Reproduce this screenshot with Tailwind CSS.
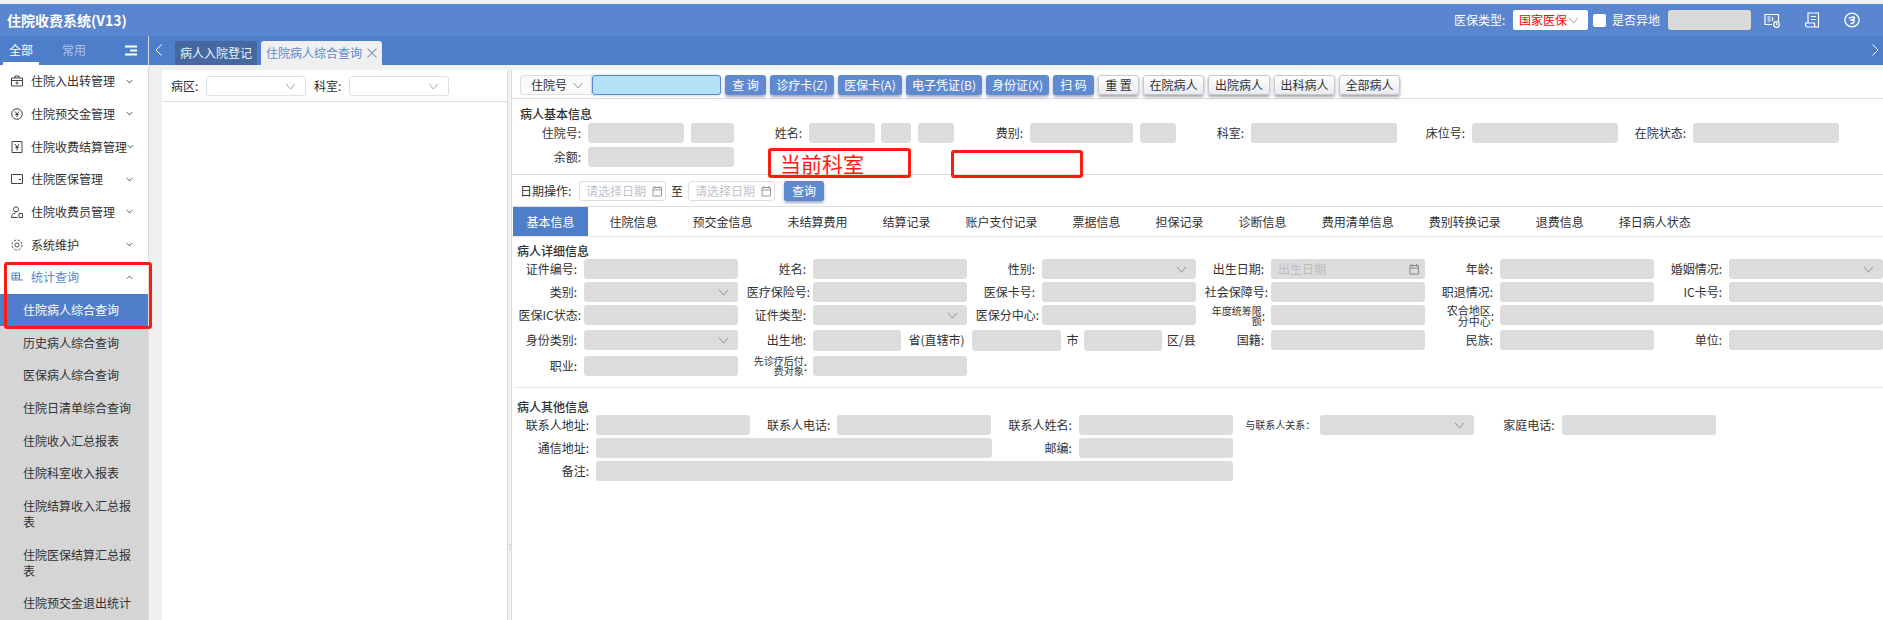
<!DOCTYPE html>
<html lang="zh-CN">
<head>
<meta charset="utf-8">
<title>住院收费系统</title>
<script src="https://cdn.jsdelivr.net/npm/@tailwindcss/browser@4"></script>
</head>
<body class="m-0">
<svg class="hidden" xmlns="http://www.w3.org/2000/svg">
  <symbol id="dn" viewBox="0 0 12 8"><path d="M1 1l5 6 5-6" fill="none" stroke="currentColor" stroke-width="1"/></symbol>
  <symbol id="sm" viewBox="0 0 8 5"><path d="M1 1l3 3 3-3" fill="none" stroke="currentColor" stroke-width="1"/></symbol>
  <symbol id="cal" viewBox="0 0 12 12"><path d="M2 2.500h8.500v8.500h-8.500zM2 5h8.500M4 1v2.500M8.500 1v2.500" fill="none" stroke="currentColor" stroke-width="1"/></symbol>
</svg>
<div class="relative w-[1883px] h-[620px] overflow-hidden flex flex-col bg-[#f0f0f0] text-[12px] text-[#303133] [font-family:'Noto_Sans_CJK_SC',sans-serif]">

  <div class="h-[4px] shrink-0 bg-[#f0f0f0]"></div>

  <!-- header -->
  <header class="h-[32px] shrink-0 bg-[#5a85cf] flex items-center text-white">
    <div class="ml-[7px] text-[14px] font-bold leading-[20px]">住院收费系统(V13)</div>
    <div class="ml-auto flex items-center h-full">
      <span class="w-[59px] whitespace-nowrap">医保类型:</span>
      <div class="w-[75px] h-[20px] bg-white rounded-[2px] flex items-center pl-[6px] text-[#ff0000] whitespace-nowrap">国家医保<svg class="w-[11px] h-[7px] text-[#999] ml-[1px]"><use href="#dn"/></svg></div>
      <span class="w-[13px] h-[13px] bg-white rounded-[2px] ml-[5px]"></span>
      <span class="ml-[6px] w-[49px] whitespace-nowrap">是否异地</span>
      <div class="ml-[7px] w-[83px] h-[20px] bg-[#d9d9d9] rounded-[3px]"></div>
      <svg class="ml-[13px] w-[16px] h-[15px]" viewBox="0 0 16 15" fill="none" stroke="#fff" stroke-width="1.200"><path d="M8 11.500H1V1.500h13.500v7"/><path d="M3.500 4h3M3.500 6h3M3.500 8h3M8.500 4v4"/><circle cx="12.500" cy="11.500" r="2.800"/><path d="M12.500 10v1.500h1.200"/></svg>
      <svg class="ml-[24px] w-[16px] h-[17px]" viewBox="0 0 16 17" fill="none" stroke="#fff" stroke-width="1.200"><path d="M4 11V1h10.500v14h-11a2 2 0 0 1-2-2v-2h9v2a2 2 0 0 0 2 2"/><path d="M7 4.500h5M7 7.500h5"/></svg>
      <svg class="ml-[24px] mr-[23px] w-[16px] h-[16px]" viewBox="0 0 16 16" fill="none" stroke="#fff" stroke-width="1.300"><ellipse cx="8" cy="8" rx="7.200" ry="6.800"/><path d="M5 6.500c1-1.500 5-2 5.500-.5 0 2-3 1.500-3.500 2 1 .5 2.500 0 3 .5.500 2-1.500 3.500-3.500 3" stroke-width="1.500"/></svg>
    </div>
  </header>

  <div class="flex-1 flex min-h-0">
    <!-- sidebar -->
    <aside class="w-[149px] shrink-0 border-r border-[#dcdcdc] bg-white flex flex-col overflow-hidden">
      <div class="h-[29px] shrink-0 bg-[#4e7dc9] relative flex items-center">
        <div class="w-[36px] ml-[3px] h-full border-b-[3px] border-white text-white flex items-center pl-[6px] pt-[1px]">全部</div>
        <span class="ml-[23px] text-[#aac4ea] pb-[2px]">常用</span>
        <svg class="ml-[39px] w-[12px] h-[11px]" viewBox="0 0 12 11" fill="none" stroke="#fff" stroke-width="2"><path d="M0 1.500h12M5 5.500h7M0 9.500h12"/></svg>
      </div>
      <div class="h-[32.67px] flex items-center pl-[11px] text-[#303133]">
        <svg class="w-[12px] h-[12px] mr-[8px] shrink-0" viewBox="0 0 12 12" fill="none" stroke="#444" stroke-width="1"><path d="M.5 3h11v8h-11zM4 3V1h4v2M.5 5.500h11M6 6.500v3M4.500 8h3"/></svg>
        <span class="whitespace-nowrap">住院入出转管理</span>
        <svg class="ml-auto mr-[15px] w-[7px] h-[5px] shrink-0"><use href="#sm"/></svg>
      </div>
      <div class="h-[32.67px] flex items-center pl-[11px]">
        <svg class="w-[12px] h-[12px] mr-[8px] shrink-0" viewBox="0 0 12 12" fill="none" stroke="#444" stroke-width="1"><circle cx="6" cy="6" r="5.300"/><path d="M4 3.500L6 6l2-2.500M6 6v3M4.200 6.500h3.600"/></svg>
        <span class="whitespace-nowrap">住院预交金管理</span>
        <svg class="ml-auto mr-[15px] w-[7px] h-[5px] shrink-0"><use href="#sm"/></svg>
      </div>
      <div class="h-[32.67px] flex items-center pl-[11px]">
        <svg class="w-[12px] h-[12px] mr-[8px] shrink-0" viewBox="0 0 12 12" fill="none" stroke="#444" stroke-width="1"><path d="M1 .5h10v11H1zM4 3l2 3 2-3M6 6v3.500M4.200 6.500h3.600"/></svg>
        <span class="whitespace-nowrap w-[96px] shrink-0">住院收费结算管理</span>
        <svg class="mr-[15px] w-[7px] h-[5px] shrink-0"><use href="#sm"/></svg>
      </div>
      <div class="h-[32.67px] flex items-center pl-[11px]">
        <svg class="w-[12px] h-[12px] mr-[8px] shrink-0" viewBox="0 0 12 12" fill="none" stroke="#444" stroke-width="1"><path d="M.5 1.500h11v9H.5zM7.500 6.500h2.500"/></svg>
        <span class="whitespace-nowrap">住院医保管理</span>
        <svg class="ml-auto mr-[15px] w-[7px] h-[5px] shrink-0"><use href="#sm"/></svg>
      </div>
      <div class="h-[32.67px] flex items-center pl-[11px]">
        <svg class="w-[12px] h-[12px] mr-[8px] shrink-0" viewBox="0 0 12 12" fill="none" stroke="#444" stroke-width="1"><circle cx="5" cy="3.300" r="2.500"/><path d="M.5 11.500c0-3 1.500-4.500 4-4.500M.5 11.500h6M8 7.500h3.500v4H8z"/></svg>
        <span class="whitespace-nowrap">住院收费员管理</span>
        <svg class="ml-auto mr-[15px] w-[7px] h-[5px] shrink-0"><use href="#sm"/></svg>
      </div>
      <div class="h-[32.67px] flex items-center pl-[11px]">
        <svg class="w-[12px] h-[12px] mr-[8px] shrink-0" viewBox="0 0 12 12" fill="none" stroke="#555" stroke-width="1"><circle cx="6" cy="6" r="2"/><circle cx="6" cy="6" r="5" stroke-dasharray="2.500 1.400"/></svg>
        <span class="whitespace-nowrap">系统维护</span>
        <svg class="ml-auto mr-[15px] w-[7px] h-[5px] shrink-0"><use href="#sm"/></svg>
      </div>
      <div class="h-[32.67px] flex items-center pl-[11px] text-[#5a85cf]">
        <svg class="w-[12px] h-[12px] mr-[8px] shrink-0" viewBox="0 0 12 12" fill="none" stroke="#5a85cf" stroke-width="1"><path d="M1 2h7.500v7H1zM1 4.500h7.500M1 7h7.500M4.700 2v7M8.500 9H12"/></svg>
        <span class="whitespace-nowrap">统计查询</span>
        <svg class="ml-auto mr-[15px] w-[7px] h-[5px] shrink-0 rotate-180 text-[#444]"><use href="#sm"/></svg>
      </div>
      <div class="flex-1 bg-[#d5d5d5] text-[#303133] leading-[16px]">
        <div class="h-[32.67px] flex items-center pl-[23px] bg-[#4e7dc9] text-white">住院病人综合查询</div>
        <div class="h-[32.67px] flex items-center pl-[23px]">历史病人综合查询</div>
        <div class="h-[32.67px] flex items-center pl-[23px]">医保病人综合查询</div>
        <div class="h-[32.67px] flex items-center pl-[23px]">住院日清单综合查询</div>
        <div class="h-[32.67px] flex items-center pl-[23px]">住院收入汇总报表</div>
        <div class="h-[32.67px] flex items-center pl-[23px]">住院科室收入报表</div>
        <div class="h-[48.67px] flex items-center pl-[23px] pr-[15px]">住院结算收入汇总报表</div>
        <div class="h-[48.67px] flex items-center pl-[23px] pr-[15px]">住院医保结算汇总报表</div>
        <div class="h-[32.67px] flex items-center pl-[23px]">住院预交金退出统计</div>
      </div>
    </aside>

    <main class="flex-1 min-w-0 flex flex-col">
      <!-- tab bar -->
      <div class="h-[29px] shrink-0 bg-[#4e7dc9] flex items-end relative">
        <svg class="self-center ml-[6px] mr-[13px] w-[7px] h-[12px] mb-[1px]" viewBox="0 0 7 12" fill="none" stroke="#fff" stroke-width="1"><path d="M6.500.5L1 6l5.500 5.500"/></svg>
        <div class="w-[82px] h-[24px] bg-[#44689f] rounded-t-[3px] text-[#eef3fb] flex items-center justify-center">病人入院登记</div>
        <div class="ml-[4px] w-[121px] h-[24px] bg-[#f0f0f0] rounded-t-[3px] text-[#5a8ad0] flex items-center pl-[5px]">住院病人综合查询<svg class="ml-[5px] w-[10px] h-[10px]" viewBox="0 0 9 9" stroke="#7c93b8" stroke-width="1"><path d="M.5.500l8 8M8.500.500l-8 8"/></svg></div>
        <svg class="ml-auto self-center mr-[4px] w-[7px] h-[12px] mb-[1px]" viewBox="0 0 7 12" fill="none" stroke="#fff" stroke-width="1"><path d="M.5.500L6 6 .5 11.500"/></svg>
      </div>

      <div class="flex-1 min-h-0 flex pl-[13px] pt-[5px]">
        <!-- left tree panel -->
        <section class="w-[346px] shrink-0 bg-white border-r border-[#dcdcdc]">
          <div class="h-[32px] border-b border-[#dcdcdc] flex items-center pt-[1px]">
            <span class="ml-[9px] w-[35px]">病区:</span>
            <div class="w-[100px] h-[20px] bg-white border border-[#dcdfe6] rounded-[3px] flex items-center justify-end pr-[9px] text-[#999]"><svg class="w-[11px] h-[7px]"><use href="#dn"/></svg></div>
            <span class="ml-[8px] w-[35px]">科室:</span>
            <div class="w-[100px] h-[20px] bg-white border border-[#dcdfe6] rounded-[3px] flex items-center justify-end pr-[9px] text-[#999]"><svg class="w-[11px] h-[7px]"><use href="#dn"/></svg></div>
          </div>
        </section>
        <div class="w-[3px] shrink-0 bg-[#f0f0f0] flex items-center justify-center pt-[400px] text-[#aaa] text-[8px] leading-[3px]">⋮</div>

        <!-- right panel -->
        <section class="flex-1 min-w-0 bg-white border-l border-[#dcdcdc] flex flex-col">
          <!-- toolbar -->
          <div class="h-[29px] shrink-0 border-b border-[#dcdcdc] flex items-start pt-[5px] pl-[8px] gap-[4px]">
            <div class="flex h-[20px]">
              <div class="w-[72px] h-full border border-[#dcdfe6] rounded-l-[3px] bg-[#fafafa] flex items-center pl-[10px]">住院号<svg class="ml-[6px] w-[10px] h-[7px] text-[#888]"><use href="#dn"/></svg></div>
              <div class="w-[129px] h-full bg-[#b3e2f6] border border-[#5a85cf] rounded-[3px] shadow-[0_0_3px_#a9cdf0]"></div>
            </div>
            <button class="w-[41px] h-[20px] rounded-[3px] bg-[#5f8ad0] text-white shadow-[0_2px_3px_rgba(60,80,130,.5)]">查 询</button>
            <button class="w-[64px] h-[20px] rounded-[3px] bg-[#5f8ad0] text-white shadow-[0_2px_3px_rgba(60,80,130,.5)] whitespace-nowrap">诊疗卡(Z)</button>
            <button class="w-[64px] h-[20px] rounded-[3px] bg-[#5f8ad0] text-white shadow-[0_2px_3px_rgba(60,80,130,.5)] whitespace-nowrap">医保卡(A)</button>
            <button class="w-[76px] h-[20px] rounded-[3px] bg-[#5f8ad0] text-white shadow-[0_2px_3px_rgba(60,80,130,.5)] whitespace-nowrap">电子凭证(B)</button>
            <button class="w-[63px] h-[20px] rounded-[3px] bg-[#5f8ad0] text-white shadow-[0_2px_3px_rgba(60,80,130,.5)] whitespace-nowrap">身份证(X)</button>
            <button class="w-[41px] h-[20px] rounded-[3px] bg-[#5f8ad0] text-white shadow-[0_2px_3px_rgba(60,80,130,.5)]">扫 码</button>
            <button class="w-[41px] h-[20px] rounded-[3px] border border-[#c8c8c8] bg-gradient-to-b from-white to-[#e9ebf2] shadow-[0_2px_3px_rgba(0,0,0,.35)]">重 置</button>
            <button class="w-[61px] h-[20px] rounded-[3px] border border-[#c8c8c8] bg-gradient-to-b from-white to-[#e9ebf2] shadow-[0_2px_3px_rgba(0,0,0,.35)]">在院病人</button>
            <button class="w-[62px] h-[20px] rounded-[3px] border border-[#c8c8c8] bg-gradient-to-b from-white to-[#e9ebf2] shadow-[0_2px_3px_rgba(0,0,0,.35)]">出院病人</button>
            <button class="w-[61px] h-[20px] rounded-[3px] border border-[#c8c8c8] bg-gradient-to-b from-white to-[#e9ebf2] shadow-[0_2px_3px_rgba(0,0,0,.35)]">出科病人</button>
            <button class="w-[61px] h-[20px] rounded-[3px] border border-[#c8c8c8] bg-gradient-to-b from-white to-[#e9ebf2] shadow-[0_2px_3px_rgba(0,0,0,.35)]">全部病人</button>
          </div>

          <!-- base info -->
          <div class="h-[76px] shrink-0 border-b border-[#dcdcdc]">
            <div class="h-[24px] pl-[8px] pt-[7px] leading-[16px] font-medium">病人基本信息</div>
            <div class="grid grid-cols-[repeat(6,221px)] gap-y-[4px] ml-[1px]">
              <div class="flex"><span class="w-[75px] pr-[7px] text-right leading-[20px]">住院号:</span><span class="w-[96px] h-[20px] bg-[#dcdcdc] rounded-[3px]"></span><span class="ml-[7px] w-[43px] h-[20px] bg-[#dcdcdc] rounded-[3px]"></span></div>
              <div class="flex"><span class="w-[75px] pr-[7px] text-right leading-[20px]">姓名:</span><span class="w-[66px] h-[20px] bg-[#dcdcdc] rounded-[3px]"></span><span class="ml-[6px] w-[30px] h-[20px] bg-[#dcdcdc] rounded-[3px]"></span><span class="ml-[7px] w-[36px] h-[20px] bg-[#dcdcdc] rounded-[3px]"></span></div>
              <div class="flex"><span class="w-[75px] pr-[7px] text-right leading-[20px]">费别:</span><span class="w-[103px] h-[20px] bg-[#dcdcdc] rounded-[3px]"></span><span class="ml-[7px] w-[36px] h-[20px] bg-[#dcdcdc] rounded-[3px]"></span></div>
              <div class="flex"><span class="w-[75px] pr-[7px] text-right leading-[20px]">科室:</span><span class="w-[146px] h-[20px] bg-[#dcdcdc] rounded-[3px]"></span></div>
              <div class="flex"><span class="w-[75px] pr-[7px] text-right leading-[20px]">床位号:</span><span class="w-[146px] h-[20px] bg-[#dcdcdc] rounded-[3px]"></span></div>
              <div class="flex"><span class="w-[75px] pr-[7px] text-right leading-[20px]">在院状态:</span><span class="w-[146px] h-[20px] bg-[#dcdcdc] rounded-[3px]"></span></div>
              <div class="flex"><span class="w-[75px] pr-[7px] text-right leading-[20px]">余额:</span><span class="w-[146px] h-[20px] bg-[#dcdcdc] rounded-[3px]"></span></div>
            </div>
          </div>

          <!-- date row -->
          <div class="h-[32px] shrink-0 border-b border-[#dcdcdc] flex items-center pl-[8px]">
            <span class="w-[59px]">日期操作:</span>
            <div class="w-[87px] h-[20px] border border-[#dcdfe6] rounded-[3px] flex items-center pl-[6px] text-[#c0c4cc] whitespace-nowrap">请选择日期<svg class="ml-[5px] w-[12px] h-[12px] text-[#999]"><use href="#cal"/></svg></div>
            <span class="w-[22px] text-center text-[#222]">至</span>
            <div class="w-[87px] h-[20px] border border-[#dcdfe6] rounded-[3px] flex items-center pl-[6px] text-[#c0c4cc] whitespace-nowrap">请选择日期<svg class="ml-[5px] w-[12px] h-[12px] text-[#999]"><use href="#cal"/></svg></div>
            <button class="ml-[9px] w-[40px] h-[20px] rounded-[3px] bg-[#5f8ad0] text-white shadow-[0_2px_3px_rgba(60,80,130,.5)]">查询</button>
          </div>

          <!-- tabs -->
          <div class="h-[30px] shrink-0 border-b border-[#e4e4e4] flex items-stretch pl-[1px] text-[#303133] whitespace-nowrap">
            <div class="w-[75px] bg-[#4e7dc9] text-white flex items-center justify-center mr-[4px]">基本信息</div>
            <div class="px-[17.500px] flex items-center">住院信息</div>
            <div class="px-[17.500px] flex items-center">预交金信息</div>
            <div class="px-[17.500px] flex items-center">未结算费用</div>
            <div class="px-[17.500px] flex items-center">结算记录</div>
            <div class="px-[17.500px] flex items-center">账户支付记录</div>
            <div class="px-[17.500px] flex items-center">票据信息</div>
            <div class="px-[17.500px] flex items-center">担保记录</div>
            <div class="px-[17.500px] flex items-center">诊断信息</div>
            <div class="px-[17.500px] flex items-center">费用清单信息</div>
            <div class="px-[17.500px] flex items-center">费别转换记录</div>
            <div class="px-[17.500px] flex items-center">退费信息</div>
            <div class="px-[17.500px] flex items-center">择日病人状态</div>
          </div>

          <!-- detail -->
          <div class="h-[22px] pl-[5px] pt-[6px] leading-[16px] font-medium">病人详细信息</div>
          <div class="grid grid-cols-[repeat(6,229px)] gap-y-[3px] leading-[20px]">
            <div class="flex"><span class="w-[72px] pr-[7px] text-right">证件编号:</span><span class="w-[154px] h-[20px] bg-[#dcdcdc] rounded-[3px]"></span></div>
            <div class="flex"><span class="w-[72px] pr-[7px] text-right">姓名:</span><span class="w-[154px] h-[20px] bg-[#dcdcdc] rounded-[3px]"></span></div>
            <div class="flex"><span class="w-[72px] pr-[7px] text-right">性别:</span><span class="w-[154px] h-[20px] bg-[#dcdcdc] rounded-[3px] flex items-center justify-end pr-[9px] text-[#888]"><svg class="w-[11px] h-[7px]"><use href="#dn"/></svg></span></div>
            <div class="flex"><span class="w-[72px] pr-[7px] text-right">出生日期:</span><span class="w-[154px] h-[20px] bg-[#dcdcdc] rounded-[3px] flex items-center justify-between pl-[7px] pr-[5px] text-[#bdbdbd]">出生日期<svg class="w-[12px] h-[12px] text-[#888]"><use href="#cal"/></svg></span></div>
            <div class="flex"><span class="w-[72px] pr-[7px] text-right">年龄:</span><span class="w-[154px] h-[20px] bg-[#dcdcdc] rounded-[3px]"></span></div>
            <div class="flex"><span class="w-[72px] pr-[7px] text-right">婚姻情况:</span><span class="w-[154px] h-[20px] bg-[#dcdcdc] rounded-[3px] flex items-center justify-end pr-[9px] text-[#888]"><svg class="w-[11px] h-[7px]"><use href="#dn"/></svg></span></div>

            <div class="flex"><span class="w-[72px] pr-[7px] text-right">类别:</span><span class="w-[154px] h-[20px] bg-[#dcdcdc] rounded-[3px] flex items-center justify-end pr-[9px] text-[#888]"><svg class="w-[11px] h-[7px]"><use href="#dn"/></svg></span></div>
            <div class="flex"><span class="w-[72px] pr-[3px] text-right">医疗保险号:</span><span class="w-[154px] h-[20px] bg-[#dcdcdc] rounded-[3px]"></span></div>
            <div class="flex"><span class="w-[72px] pr-[7px] text-right">医保卡号:</span><span class="w-[154px] h-[20px] bg-[#dcdcdc] rounded-[3px]"></span></div>
            <div class="flex"><span class="w-[72px] pr-[3px] text-right">社会保障号:</span><span class="w-[154px] h-[20px] bg-[#dcdcdc] rounded-[3px]"></span></div>
            <div class="flex"><span class="w-[72px] pr-[7px] text-right">职退情况:</span><span class="w-[154px] h-[20px] bg-[#dcdcdc] rounded-[3px]"></span></div>
            <div class="flex"><span class="w-[72px] pr-[7px] text-right">IC卡号:</span><span class="w-[154px] h-[20px] bg-[#dcdcdc] rounded-[3px]"></span></div>

            <div class="flex"><span class="w-[72px] pr-[3px] text-right whitespace-nowrap">医保IC状态:</span><span class="w-[154px] h-[20px] bg-[#dcdcdc] rounded-[3px]"></span></div>
            <div class="flex"><span class="w-[72px] pr-[7px] text-right">证件类型:</span><span class="w-[154px] h-[20px] bg-[#dcdcdc] rounded-[3px] flex items-center justify-end pr-[9px] text-[#888]"><svg class="w-[11px] h-[7px]"><use href="#dn"/></svg></span></div>
            <div class="flex"><span class="w-[72px] pr-[3px] text-right">医保分中心:</span><span class="w-[154px] h-[20px] bg-[#dcdcdc] rounded-[3px]"></span></div>
            <div class="flex"><span class="w-[72px] pr-[6px] flex items-center justify-end"><span class="text-[10px] leading-[10px] text-right whitespace-nowrap">年度统筹限<br>额</span>:</span><span class="w-[154px] h-[20px] bg-[#dcdcdc] rounded-[3px]"></span></div>
            <div class="flex col-span-2"><span class="w-[72px] pr-[6px] flex items-center justify-end"><span class="text-[11px] leading-[11px] text-right whitespace-nowrap">农合地区<br>分中心</span>:</span><span class="w-[383px] h-[20px] bg-[#dcdcdc] rounded-[3px]"></span></div>

            <div class="flex"><span class="w-[72px] pr-[7px] text-right">身份类别:</span><span class="w-[154px] h-[20px] bg-[#dcdcdc] rounded-[3px] flex items-center justify-end pr-[9px] text-[#888]"><svg class="w-[11px] h-[7px]"><use href="#dn"/></svg></span></div>
            <div class="flex col-span-2 whitespace-nowrap"><span class="w-[72px] pr-[7px] text-right">出生地:</span><span class="w-[88px] h-[21px] bg-[#dcdcdc] rounded-[3px]"></span><span class="w-[71px] text-center">省(直辖市)</span><span class="w-[89px] h-[21px] bg-[#dcdcdc] rounded-[3px]"></span><span class="w-[23px] text-center">市</span><span class="w-[78px] h-[21px] bg-[#dcdcdc] rounded-[3px]"></span><span class="ml-[5px]">区/县</span></div>
            <div class="flex"><span class="w-[72px] pr-[7px] text-right">国籍:</span><span class="w-[154px] h-[20px] bg-[#dcdcdc] rounded-[3px]"></span></div>
            <div class="flex"><span class="w-[72px] pr-[7px] text-right">民族:</span><span class="w-[154px] h-[20px] bg-[#dcdcdc] rounded-[3px]"></span></div>
            <div class="flex"><span class="w-[72px] pr-[7px] text-right">单位:</span><span class="w-[154px] h-[20px] bg-[#dcdcdc] rounded-[3px]"></span></div>

            <div class="flex mt-[2px]"><span class="w-[72px] pr-[7px] text-right">职业:</span><span class="w-[154px] h-[20px] bg-[#dcdcdc] rounded-[3px]"></span></div>
            <div class="flex mt-[2px]"><span class="w-[72px] pr-[6px] flex items-center justify-end"><span class="text-[10px] leading-[10px] text-right whitespace-nowrap">先诊疗后付<br>费对象</span>:</span><span class="w-[154px] h-[20px] bg-[#dcdcdc] rounded-[3px]"></span></div>
          </div>

          <div class="ml-[4px] mt-[11px] border-t border-[#e4e4e4]"></div>

          <!-- other info -->
          <div class="h-[27px] pl-[5px] pt-[11px] leading-[16px] font-medium">病人其他信息</div>
          <div class="grid grid-cols-[repeat(6,241.400px)] gap-y-[3px] leading-[20px]">
            <div class="flex"><span class="w-[84px] pr-[7px] text-right">联系人地址:</span><span class="w-[154px] h-[20px] bg-[#dcdcdc] rounded-[3px]"></span></div>
            <div class="flex"><span class="w-[84px] pr-[7px] text-right">联系人电话:</span><span class="w-[154px] h-[20px] bg-[#dcdcdc] rounded-[3px]"></span></div>
            <div class="flex"><span class="w-[84px] pr-[7px] text-right">联系人姓名:</span><span class="w-[154px] h-[20px] bg-[#dcdcdc] rounded-[3px]"></span></div>
            <div class="flex"><span class="w-[84px] pr-[5px] text-right text-[10px] whitespace-nowrap">与联系人关系：</span><span class="w-[154px] h-[20px] bg-[#dcdcdc] rounded-[3px] flex items-center justify-end pr-[9px] text-[#888]"><svg class="w-[11px] h-[7px]"><use href="#dn"/></svg></span></div>
            <div class="flex"><span class="w-[84px] pr-[7px] text-right">家庭电话:</span><span class="w-[154px] h-[20px] bg-[#dcdcdc] rounded-[3px]"></span></div>
            <div></div>

            <div class="flex col-span-2"><span class="w-[84px] pr-[7px] text-right">通信地址:</span><span class="w-[396px] h-[20px] bg-[#dcdcdc] rounded-[3px]"></span></div>
            <div class="flex col-span-4"><span class="w-[84px] pr-[7px] text-right">邮编:</span><span class="w-[154px] h-[20px] bg-[#dcdcdc] rounded-[3px]"></span></div>

            <div class="flex col-span-6"><span class="w-[84px] pr-[7px] text-right">备注:</span><span class="w-[637px] h-[20px] bg-[#dcdcdc] rounded-[3px]"></span></div>
          </div>
        </section>
      </div>
    </main>
  </div>

  <!-- red annotation boxes drawn over the screenshot -->
  <div class="absolute left-[4px] top-[262px] w-[148px] h-[67px] border-[3px] border-[#ff1a12] rounded-[3px]"></div>
  <div class="absolute left-[768px] top-[148px] w-[143px] h-[30px] border-[3px] border-[#ff1a12] rounded-[3px] pl-[9px] text-[#ff1a12] text-[21px] leading-[24px] whitespace-nowrap">当前科室</div>
  <div class="absolute left-[951px] top-[150px] w-[132px] h-[28px] border-[3px] border-[#ff1a12] rounded-[3px]"></div>
</div>
</body>
</html>
